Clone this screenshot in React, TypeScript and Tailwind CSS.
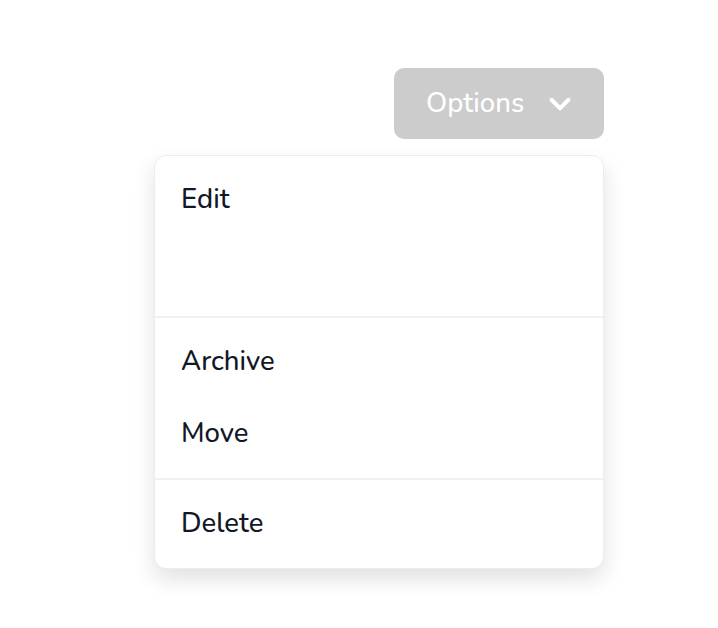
import { ChevronDown } from "lucide-react";

const font = { fontFamily: '"Nunito", "Lato", "Open Sans", sans-serif' };

function Item({ label }: { label: string }) {
  return (
    <div className="flex h-[72px] items-center px-[26px] pb-[1px] text-[27.5px] font-medium text-[#111827]">
      {label}
    </div>
  );
}

export default function App() {
  return (
    <div className="min-h-[628px] w-[718px] bg-white" style={font}>
      <div className="flex flex-col items-end pr-[114px] pt-[68px]">
        <button
          type="button"
          className="flex h-[71px] w-[210px] items-center rounded-[10px] bg-[#cccccc] pl-[32px] text-[27.5px] font-medium text-white"
        >
          <span>Options</span>
          <ChevronDown className="ml-[19px] h-[34px] w-[34px]" strokeWidth={2.8} />
        </button>
        <div className="mt-[16px] w-[450px] rounded-[12px] border border-[#ececec] bg-white shadow-[0_10px_22px_rgba(0,0,0,0.12)]">
          <div className="h-[160px] py-[8px]">
            <Item label="Edit" />
          </div>
          <div className="border-t-2 border-[#f0f0f0] py-[8px]">
            <Item label="Archive" />
            <Item label="Move" />
          </div>
          <div className="border-t-2 border-[#f0f0f0] py-[8px]">
            <Item label="Delete" />
          </div>
        </div>
      </div>
    </div>
  );
}
